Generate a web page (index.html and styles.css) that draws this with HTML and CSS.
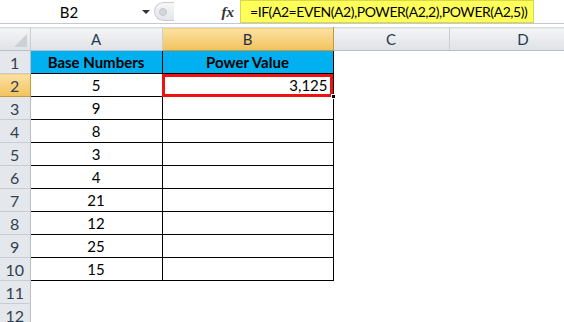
FILE: index.html
```html
<!DOCTYPE html>
<html lang="en">
<head>
  <meta charset="UTF-8" />
  <title>POWER formula</title>
  <link rel="stylesheet" href="styles.css">
</head>
<body>

  <div class="formula-bar">
    <div class="name-box">
      <span class="name">B2</span>
      <span class="drop"></span>
    </div>
    <div class="splitter"><span class="knob"></span></div>
    <div class="fx">fx</div>
    <div class="formula">=IF(A2=EVEN(A2),POWER(A2,2),POWER(A2,5))</div>
  </div>

  <div class="sheet-wrap">
  <table class="sheet">
    <colgroup>
      <col class="c-row">
      <col class="c-a">
      <col class="c-b">
      <col class="c-c">
      <col class="c-d">
    </colgroup>
    <thead>
      <tr>
        <th class="corner"><span class="tri"></span></th>
        <th>A</th>
        <th class="sel">B</th>
        <th>C</th>
        <th>D</th>
      </tr>
    </thead>
    <tbody>
      <tr>
        <th>1</th>
        <td class="head">Base Numbers</td>
        <td class="head">Power Value</td>
        <td></td><td></td>
      </tr>
      <tr>
        <th class="sel">2</th>
        <td class="num">5</td>
        <td class="val active">3,125<span class="handle"></span></td>
        <td></td><td></td>
      </tr>
      <tr><th>3</th><td class="num">9</td><td class="val"></td><td></td><td></td></tr>
      <tr><th>4</th><td class="num">8</td><td class="val"></td><td></td><td></td></tr>
      <tr><th>5</th><td class="num">3</td><td class="val"></td><td></td><td></td></tr>
      <tr><th>6</th><td class="num">4</td><td class="val"></td><td></td><td></td></tr>
      <tr><th>7</th><td class="num">21</td><td class="val"></td><td></td><td></td></tr>
      <tr><th>8</th><td class="num">12</td><td class="val"></td><td></td><td></td></tr>
      <tr><th>9</th><td class="num">25</td><td class="val"></td><td></td><td></td></tr>
      <tr><th>10</th><td class="num">15</td><td class="val"></td><td></td><td></td></tr>
      <tr><th>11</th><td></td><td></td><td></td><td></td></tr>
      <tr><th>12</th><td></td><td></td><td></td><td></td></tr>
    </tbody>
  </table>
  </div>

</body>
</html>
```

FILE: styles.css
```css
* {
  box-sizing: border-box;
}

body {
  margin: 0;
  background: #fff;
  font-family: Lato, 'Open Sans', sans-serif;
  font-size: 15px;
  color: #000;
  overflow: hidden;
}

/* formula bar */

.formula-bar {
  display: flex;
  align-items: stretch;
  height: 24px;
  border-bottom: 1px solid #c5c9cf;
  margin-bottom: 3px;
}

.name-box {
  width: 152px;
  display: flex;
  align-items: center;
}

.name {
  flex: 1;
  text-align: center;
  padding-right: 4px;
  font-size: 15px;
}

.drop {
  width: 0;
  height: 0;
  border-left: 4px solid transparent;
  border-right: 4px solid transparent;
  border-top: 4px solid #333;
  margin-right: 2px;
}

.splitter {
  width: 20px;
  margin: 2px 0 2px 2px;
  border: 1px solid #c9ccd1;
  border-right: none;
  border-radius: 10px 0 0 10px;
  background: linear-gradient(#f7f7f7, #e3e5e8);
  display: flex;
  align-items: center;
  padding-left: 4px;
}

.knob {
  width: 8px;
  height: 8px;
  border-radius: 50%;
  background: #d4d6d9;
  border: 1px solid #c3c5c8;
}

.fx {
  width: 66px;
  text-align: right;
  padding-right: 6px;
  font-family: 'Liberation Serif', serif;
  font-style: italic;
  font-weight: bold;
  font-size: 15px;
  line-height: 24px;
  color: #333;
}

.formula {
  width: 294px;
  background: #ffff5a;
  border: 1px solid #d8d84a;
  padding-left: 9px;
  font-size: 14px;
  letter-spacing: -0.45px;
  line-height: 22px;
  white-space: nowrap;
}

/* sheet */

.sheet-wrap {
  width: 564px;
  overflow: hidden;
}

.sheet {
  border-collapse: collapse;
  table-layout: fixed;
  width: 597px;
}

.c-row { width: 30px; }
.c-a { width: 132px; }
.c-b { width: 171px; }
.c-c { width: 116px; }
.c-d { width: 148px; }

.sheet th,
.sheet td {
  height: 23px;
  padding: 0;
  font-weight: normal;
}

.sheet thead th {
  background: linear-gradient(#f3f4f6, #dfe2e6);
  border-right: 1px solid #c9ced5;
  border-bottom: 1px solid #b9bfc8;
  border-top: 1px solid #d7dbe0;
  color: #26384f;
  text-align: center;
}

.sheet thead th.sel {
  background: linear-gradient(#fbe2a3, #f2c25c);
  border-right-color: #c59a3f;
  border-bottom-color: #c59a3f;
  color: #1f2e44;
}

.corner {
  position: relative;
}

.tri {
  position: absolute;
  right: 3px;
  bottom: 3px;
  width: 0;
  height: 0;
  border-left: 13px solid transparent;
  border-bottom: 13px solid #cdd1d6;
}

.sheet tbody th {
  background: #e4e7eb;
  border-right: 1px solid #b7bec7;
  border-bottom: 1px solid #c8cdd4;
  color: #333f50;
  text-align: center;
  font-size: 16px;
}

.sheet tbody th.sel {
  background: linear-gradient(#fbe2a3, #f2c25c);
  border-bottom-color: #c59a3f;
  border-right-color: #c59a3f;
}

.sheet td.head {
  background: #00b0f0;
  font-weight: bold;
  text-align: center;
  border: 1px solid #000;
  border-top: none;
}

.num {
  text-align: center;
  border: 1px solid #000;
  border-top: none;
}

.sheet td.val {
  text-align: right;
  border: 1px solid #000;
  border-top: none;
  padding-right: 4px;
  position: relative;
}

.sheet td.val.active {
  outline: 3px solid #ee1111;
  outline-offset: -3px;
  padding-right: 5px;
}

.handle {
  position: absolute;
  right: -3px;
  bottom: -3px;
  width: 5px;
  height: 5px;
  background: #000;
  border: 1px solid #fff;
}
```
